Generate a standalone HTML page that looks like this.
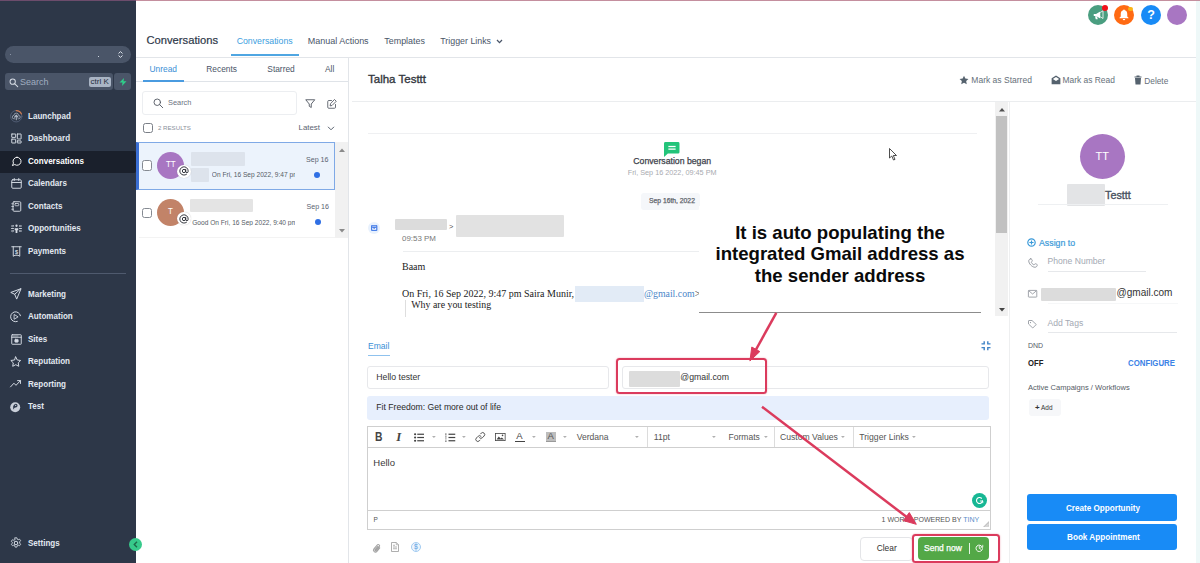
<!DOCTYPE html>
<html>
<head>
<meta charset="utf-8">
<title>Conversations</title>
<style>
*{box-sizing:border-box;margin:0;padding:0}
html,body{width:1200px;height:563px;overflow:hidden;background:#fff;font-family:"Liberation Sans",sans-serif;color:#333}
#app{position:relative;width:1200px;height:563px;overflow:hidden;background:#fff}
.a{position:absolute}
.t{position:absolute;white-space:nowrap;line-height:1;transform:translateY(-50%)}
.b{font-weight:bold}
.serif{font-family:"Liberation Serif",serif}
svg{position:absolute;overflow:visible}
/* sidebar */
#side{position:absolute;left:0;top:0;width:136px;height:563px;background:#2d3748}
.nav{margin-top:-0.4px;color:#e2e8f0;font-size:8.75px;font-weight:bold;left:27.5px;transform:translateY(-50%) scaleX(.92);transform-origin:left center}
.blur{position:absolute;background:#e3e3e3;border-radius:1px;filter:blur(.5px)}
.hl{position:absolute;height:1px;background:#e6e8eb}
</style>
</head>
<body>
<div id="app">
<!-- top accent line -->

<!-- SIDEBAR -->
<div id="side">
  <div class="a" style="left:5px;top:46px;width:126px;height:17px;border-radius:9px;background:#4a5568"></div>
  <div class="a" style="left:5px;top:73px;width:108px;height:17px;border-radius:3px;background:#4a5568"></div>
  <div class="a" style="left:114px;top:73px;width:17px;height:17px;border-radius:3px;background:#4a5568"></div>
  <div class="t" style="left:20px;top:81.5px;font-size:9px;color:#a0aec0">Search</div>
  <div class="a" style="left:88.700px;top:77px;width:22px;height:10px;border-radius:2px;background:#a9b4c4"></div>
  <div class="t" style="left:90.500px;top:82px;font-size:8px;color:#252e3d">ctrl K</div>

  <div class="a" style="left:0;top:150.800px;width:136px;height:21.900px;background:#1a202c;border-radius:0 2px 2px 0"></div>
  <div class="t nav" style="top:116px">Launchpad</div>
  <div class="t nav" style="top:138.5px">Dashboard</div>
  <div class="t nav" style="top:161px;color:#fff">Conversations</div>
  <div class="t nav" style="top:183.5px">Calendars</div>
  <div class="t nav" style="top:206px">Contacts</div>
  <div class="t nav" style="top:228.5px">Opportunities</div>
  <div class="t nav" style="top:251px">Payments</div>
  <div class="a" style="left:10px;top:272.500px;width:116px;height:1px;background:#4f5a6e"></div>
  <div class="t nav" style="top:294px">Marketing</div>
  <div class="t nav" style="top:316.5px">Automation</div>
  <div class="t nav" style="top:339px">Sites</div>
  <div class="t nav" style="top:361.5px">Reputation</div>
  <div class="t nav" style="top:384px">Reporting</div>
  <div class="t nav" style="top:406.5px">Test</div>
  <div class="t nav" style="top:543px">Settings</div>
<svg style="left:9.750px;top:110.250px" width="12.500" height="12.500" viewBox="0 0 22 22" fill="none" stroke="#d5dbe4" stroke-width="1.9" stroke-linecap="round" stroke-linejoin="round"><circle cx="11" cy="11" r="10" stroke="#56617a" stroke-width="1.500"/><path d="M11 1a10 10 0 0 1 9.200 6" stroke="#cf7a4e" stroke-width="2"/><path d="M11 17v-7M8 12.500l3-3.500 3 3.500" stroke="#b4bcc9" stroke-width="1.800"/><path d="M8 15.500H7a3 3 0 0 1 0-6 4 4 0 0 1 8 0 3 3 0 0 1 0 6h-1" stroke="#a4adbc" stroke-width="1.400"/></svg>
<svg style="left:10.5px;top:133.0px" width="11" height="11" viewBox="0 0 22 22" fill="none" stroke="#d5dbe4" stroke-width="1.9" stroke-linecap="round" stroke-linejoin="round"><rect x="1.500" y="2" width="7.800" height="6.800" rx="0.400"/><rect x="12.700" y="2" width="7.500" height="10" rx="0.400"/><rect x="1.500" y="12.300" width="7.800" height="7.700" rx="0.400"/><rect x="12.700" y="15.800" width="7.500" height="4.200" rx="0.400"/></svg>
<svg style="left:10.5px;top:155.5px" width="11" height="11" viewBox="0 0 22 22" fill="none" stroke="#d5dbe4" stroke-width="1.9" stroke-linecap="round" stroke-linejoin="round"><path d="M12 2.500A8 8 0 1 1 7.400 17L2.800 19.200 4.900 14.200A8 8 0 0 1 12 2.500Z" stroke="#fff"/></svg>
<svg style="left:10.5px;top:178.0px" width="11" height="11" viewBox="0 0 22 22" fill="none" stroke="#d5dbe4" stroke-width="1.9" stroke-linecap="round" stroke-linejoin="round"><rect x="1.500" y="3.500" width="19" height="17" rx="2"/><path d="M1.500 9h19M6.500 1v4M15.500 1v4"/></svg>
<svg style="left:10.5px;top:200.5px" width="11" height="11" viewBox="0 0 22 22" fill="none" stroke="#d5dbe4" stroke-width="1.9" stroke-linecap="round" stroke-linejoin="round"><rect x="4" y="1.500" width="15.500" height="19" rx="2"/><rect x="8" y="5" width="7.500" height="4.500" rx="0.800" stroke-width="1.600"/><path d="M1.500 5.500h3.500M1.500 11h3.500M1.500 16.500h3.500" stroke-width="1.600"/></svg>
<svg style="left:10.5px;top:223.0px" width="11" height="11" viewBox="0 0 22 22" fill="none" stroke="#d5dbe4" stroke-width="1.9" stroke-linecap="round" stroke-linejoin="round"><circle cx="11" cy="5.500" r="2.300" fill="#d5dbe4" stroke="none"/><path d="M7.500 10.500h7v4h-1.700v5.500h-3.600v-5.500H7.500z" fill="#d5dbe4" stroke="none"/><path d="M1 6h3M1 11h4M1 16h3M18 6h3M17 11h4M18 16h3" stroke-width="1.800"/><path d="M4 4.500l1.500 1.500L4 7.500M18 4.500L16.500 6 18 7.500M4 14.500l1.500 1.500L4 17.500M18 14.500L16.500 16l1.500 1.500" stroke-width="1.300"/></svg>
<svg style="left:10.5px;top:245.5px" width="11" height="11" viewBox="0 0 22 22" fill="none" stroke="#d5dbe4" stroke-width="1.9" stroke-linecap="round" stroke-linejoin="round"><path d="M1.500 1.500h19M4.500 1.500v19l3.500-2h6l3.500 2v-19"/><text x="11" y="15" font-family="Liberation Sans" font-weight="bold" font-size="11" text-anchor="middle" fill="#d5dbe4" stroke="none">$</text></svg>
<svg style="left:10.25px;top:288.25px" width="11.5" height="11.5" viewBox="0 0 22 22" fill="none" stroke="#d5dbe4" stroke-width="1.9" stroke-linecap="round" stroke-linejoin="round"><path d="M20.500 1.500L1.500 8.500l7.500 3.500 3.500 8.500zM20.500 1.500L9 12"/></svg>
<svg style="left:10.25px;top:310.75px" width="11.5" height="11.5" viewBox="0 0 22 22" fill="none" stroke="#d5dbe4" stroke-width="1.9" stroke-linecap="round" stroke-linejoin="round"><path d="M20 9a9.500 9.500 0 1 0-6 11" /><path d="M8.500 7l7 4.200-7 4.200z" stroke-width="1.700"/></svg>
<svg style="left:10.5px;top:333.5px" width="11" height="11" viewBox="0 0 22 22" fill="none" stroke="#d5dbe4" stroke-width="1.9" stroke-linecap="round" stroke-linejoin="round"><rect x="1.500" y="1.500" width="19" height="19" rx="1"/><path d="M1.500 6.500h19" /><path d="M4 4h10" stroke-width="1.200"/><rect x="7.500" y="10.500" width="7" height="6" rx="1.500" fill="#d5dbe4" stroke-width="1.200"/></svg>
<svg style="left:10.25px;top:355.75px" width="11.5" height="11.5" viewBox="0 0 22 22" fill="none" stroke="#d5dbe4" stroke-width="1.9" stroke-linecap="round" stroke-linejoin="round"><path d="M11 1.800l2.900 5.900 6.500.9-4.700 4.600 1.100 6.500L11 16.600l-5.800 3.100 1.100-6.500L1.600 8.600l6.500-.9z"/></svg>
<svg style="left:10.25px;top:378.25px" width="11.5" height="11.5" viewBox="0 0 22 22" fill="none" stroke="#d5dbe4" stroke-width="1.9" stroke-linecap="round" stroke-linejoin="round"><path d="M1 17l6.500-7 4 4 8.500-9M14.500 5H20v5.500"/></svg>
<svg style="left:9.700px;top:401.800px" width="10.400" height="10.400" viewBox="0 0 22 22"><circle cx="11" cy="11" r="10.500" fill="#c9cfd9"/><path d="M12 3.500a4 4 0 0 1 0 8a3.500 3.500 0 0 0-3 5.500a8 8 0 0 1 3-13.500z" fill="#2f3a4d"/><circle cx="12" cy="7.300" r="1.300" fill="#c9cfd9"/></svg>
<svg style="left:10.0px;top:537.0px" width="12" height="12" viewBox="0 0 22 22" fill="none" stroke="#d5dbe4" stroke-width="1.9" stroke-linecap="round" stroke-linejoin="round"><circle cx="11" cy="11" r="3.200"/><path d="M9.300 1.500h3.400l.6 2.600 1.700.9 2.500-1 2 2.800-1.800 2 .0 2.400 1.800 2-2 2.800-2.500-1-1.700.9-.6 2.600H9.300l-.6-2.600-1.700-.9-2.500 1-2-2.800 1.800-2V9.800l-1.800-2 2-2.800 2.500 1 1.700-.9z" stroke-width="1.600"/></svg>
<svg style="left:8.700px;top:77.500px" width="9.500" height="9.500" viewBox="0 0 18 18" fill="none" stroke="#d5dbe4" stroke-width="1.900" stroke-linecap="round"><circle cx="7" cy="7" r="5"/><path d="M11 11l5.500 5.500"/></svg>
<svg style="left:118.500px;top:78px" width="8" height="8" viewBox="0 0 16 16"><path d="M10 0L1 9h6l-1 7 9-9.500H9z" fill="#2fd08a"/></svg>
<svg style="left:118px;top:50px" width="5" height="9" viewBox="0 0 12 20" fill="none" stroke="#e2e8f0" stroke-width="2.400" stroke-linecap="round" stroke-linejoin="round"><path d="M2 7l4-4 4 4M2 13l4 4 4-4"/></svg>
<div class="a" style="left:97.500px;top:55.500px;width:1.500px;height:1.500px;background:#cbd5e0"></div><div class="a" style="left:10px;top:54px;width:1px;height:1px;background:#8a94a6"></div>
</div>
<div class="a" style="left:0;top:0;width:136px;height:1px;background:#6c4c6c"></div><div class="a" style="left:136px;top:0;width:1064px;height:1px;background:#c48f9e"></div>
<!-- collapse button -->
<div class="a" style="left:129px;top:538px;width:13px;height:13px;border-radius:50%;background:#37ca8b"></div>


<svg style="left:132.500px;top:541px" width="5" height="7" viewBox="0 0 5 7"><path d="M4 0.800L1.300 3.500 4 6.200" fill="none" stroke="#1d6b4a" stroke-width="1.400"/></svg>
<!-- HEADER -->
<div class="t" style="left:146.500px;top:40.700px;font-size:11.200px;color:#2d3748;-webkit-text-stroke:0.200px #2d3748">Conversations</div>
<div class="t" style="left:236.7px;top:40.9px;font-size:8.76px;color:#3b9ede">Conversations</div>
<div class="a" style="left:231px;top:54.100px;width:67.500px;height:1.800px;background:#4fa6e2"></div>
<div class="t" style="left:307.7px;top:40.9px;font-size:8.99px;color:#4a5568">Manual Actions</div>
<div class="t" style="left:384.3px;top:40.9px;font-size:8.93px;color:#4a5568">Templates</div>
<div class="t" style="left:440.3px;top:40.9px;font-size:8.83px;color:#4a5568">Trigger Links</div>
<svg style="left:495.5px;top:39px" width="7" height="5" viewBox="0 0 7 5"><path d="M1 1 L3.5 3.6 L6 1" fill="none" stroke="#4a5568" stroke-width="1.3"/></svg>
<div class="hl" style="left:136px;top:57px;width:1060px;background:#e2e5e9"></div>

<!-- top right icons -->
<div class="a" style="left:1088px;top:5px;width:20px;height:20px;border-radius:50%;background:#4a9e80"></div>
<svg style="left:1093px;top:9.500px" width="11" height="11" viewBox="0 0 22 22"><path d="M1.500 8h4.500l8.500-5v14l-8.500-5H1.500z" fill="#fff"/><path d="M14.500 5l5.500-3.500v15.500l-5.500-3.500" fill="none" stroke="#fff" stroke-width="1.600" stroke-linejoin="round"/><path d="M4 12.500h4l1.500 6h-4z" fill="#fff"/></svg>
<div class="a" style="left:1102px;top:4.800px;width:6px;height:6px;border-radius:50%;background:#f0101a"></div>
<div class="a" style="left:1114.400px;top:5px;width:20px;height:20px;border-radius:50%;background:#ff6a13"></div>
<svg style="left:1119.400px;top:9px" width="10" height="11.500" viewBox="0 0 20 23"><path d="M10 1c-1 0-1.700.7-1.700 1.700C5 3.600 3.500 6.500 3.500 10v5L1 17.500v1h18v-1L16.500 15v-5c0-3.500-1.500-6.400-4.800-7.300C11.700 1.700 11 1 10 1zM7.500 20a2.500 2.500 0 0 0 5 0z" fill="#fff"/></svg>
<div class="a" style="left:1128px;top:6.500px;width:4.600px;height:4.600px;border-radius:50%;background:#fbb415"></div>
<div class="a" style="left:1140.800px;top:5px;width:20px;height:20px;border-radius:50%;background:#188bf6"></div>
<div class="t b" style="left:1147.300px;top:15.300px;font-size:12.500px;color:#fff">?</div>
<div class="a" style="left:1167px;top:5px;width:20px;height:20px;border-radius:50%;background:#a876c2"></div>

<!-- LIST PANEL -->
<div class="a" style="left:348px;top:57px;width:1px;height:506px;background:#e2e5e9"></div>
<div class="t" style="left:149.5px;top:68.8px;font-size:8.4px;color:#3b8fd6">Unread</div>
<div class="t" style="left:206.3px;top:68.8px;font-size:8.4px;color:#4a5568">Recents</div>
<div class="t" style="left:267.3px;top:68.8px;font-size:8.4px;color:#4a5568">Starred</div>
<div class="t" style="left:325px;top:68.8px;font-size:8.4px;color:#4a5568">All</div>
<div class="hl" style="left:136px;top:81px;width:212px;background:#dfe3e8"></div>
<div class="a" style="left:143px;top:80px;width:41px;height:2px;background:#4a9be0"></div>
<div class="a" style="left:142px;top:91px;width:155px;height:24px;border:1px solid #eceef1;border-radius:3px;background:#fff"></div>
<div class="t" style="left:168px;top:103px;font-size:7.4px;color:#6b7280">Search</div>
<div class="a" style="left:142.5px;top:123px;width:10px;height:10px;border:1px solid #7a7f87;border-radius:2.5px;background:#fff"></div>
<div class="t" style="left:158px;top:127.6px;font-size:6.14px;color:#8a919b">2 RESULTS</div>
<div class="t" style="left:298.5px;top:128px;font-size:7.9px;color:#5a6370">Latest</div>
<svg style="left:327px;top:126px" width="8" height="5" viewBox="0 0 8 5"><path d="M1 0.8 L4 3.8 L7 0.8" fill="none" stroke="#5a6370" stroke-width="1"/></svg>

<!-- item 1 -->
<div class="a" style="left:136px;top:142px;width:199px;height:48px;background:#ecf3fc;border:1px solid #7fa9e6;border-left:3px solid #3b6fd4"></div>
<div class="a" style="left:141.700px;top:160.300px;width:10.300px;height:10.300px;border:1px solid #858a92;border-radius:2.500px;background:#fff"></div>
<div class="a" style="left:156.5px;top:151.5px;width:27px;height:27px;border-radius:50%;background:#a876c2"></div>
<div class="t" style="left:166.200px;top:164.700px;font-size:9.300px;color:#fff;transform:translateY(-50%) scaleX(.85);transform-origin:left center">TT</div>
<div class="blur" style="left:190.500px;top:152px;width:54.500px;height:14px;background:#dde3ec"></div>
<div class="blur" style="left:190.500px;top:168px;width:18.500px;height:13.500px;background:#dde3ec"></div>
<div class="t" style="left:211.800px;top:175.300px;font-size:6.600px;color:#555c66;width:83.500px;overflow:hidden">On Fri, 16 Sep 2022, 9:47 pm</div>
<div class="t" style="left:306px;top:161px;font-size:7.1px;color:#5a6370">Sep 16</div>
<div class="a" style="left:314px;top:171.800px;width:6px;height:6px;border-radius:50%;background:#2f6fe4"></div>
<!-- item 2 -->
<div class="a" style="left:141.700px;top:207.800px;width:10.300px;height:10.300px;border:1px solid #858a92;border-radius:2.500px;background:#fff"></div>
<div class="a" style="left:156.5px;top:199px;width:27px;height:27px;border-radius:50%;background:#c28368"></div>
<div class="t" style="left:168.400px;top:212.300px;font-size:9.300px;color:#fff;transform:translateY(-50%) scaleX(.85);transform-origin:left center">T</div>
<div class="blur" style="left:190px;top:199px;width:63px;height:13px;background:#e4e4e4"></div>
<div class="t" style="left:192.200px;top:222.500px;font-size:6.600px;color:#555c66;width:103.300px;overflow:hidden">Good On Fri, 16 Sep 2022, 9:40 pm</div>
<div class="t" style="left:306.500px;top:208.400px;font-size:7.100px;color:#5a6370">Sep 16</div>
<div class="a" style="left:314.500px;top:218.700px;width:6px;height:6px;border-radius:50%;background:#2f6fe4"></div>
<div class="hl" style="left:139px;top:237px;width:196px;background:#f3f3f3"></div>

<svg style="left:153px;top:98px" width="10.500" height="10.500" viewBox="0 0 21 21" fill="none" stroke="#4f5560" stroke-width="1.800" stroke-linecap="round"><circle cx="8.500" cy="8.500" r="6.500"/><path d="M13.500 13.500l6 6"/></svg>
<svg style="left:305px;top:99px" width="10.500" height="9.500" viewBox="0 0 21 19" fill="none" stroke="#4f5560" stroke-width="1.800" stroke-linejoin="round"><path d="M1.500 1.500h18l-7 8.500v7l-4-2.500v-4.500z"/></svg>
<svg style="left:326.500px;top:98.500px" width="10" height="10" viewBox="0 0 20 20" fill="none" stroke="#4f5560" stroke-width="1.700" stroke-linejoin="round" stroke-linecap="round"><path d="M9 3H3.500a2 2 0 0 0-2 2v11.500a2 2 0 0 0 2 2H15a2 2 0 0 0 2-2V11"/><path d="M15.500 1.500l3 3L10 13l-3.800.8L7 10z"/></svg>
<div class="a" style="left:177.200px;top:164.600px;width:13.400px;height:13.400px;border-radius:50%;background:#fff;box-shadow:0 0 1px rgba(0,0,0,.25)"></div>
<svg style="left:178.9px;top:166.4px" width="10" height="10" viewBox="0 0 24 24" fill="none" stroke="#2e3138" stroke-width="2.300" stroke-linecap="round"><circle cx="12" cy="12" r="4"/><path d="M16 8v5a3 3 0 0 0 6 0v-1a10 10 0 1 0-3.920 7.940"/></svg>
<div class="a" style="left:177.200px;top:212.100px;width:13.400px;height:13.400px;border-radius:50%;background:#fff;box-shadow:0 0 1px rgba(0,0,0,.25)"></div>
<svg style="left:178.9px;top:213.9px" width="10" height="10" viewBox="0 0 24 24" fill="none" stroke="#2e3138" stroke-width="2.300" stroke-linecap="round"><circle cx="12" cy="12" r="4"/><path d="M16 8v5a3 3 0 0 0 6 0v-1a10 10 0 1 0-3.920 7.940"/></svg>
<!-- list scrollbar -->
<div class="a" style="left:335px;top:142px;width:13px;height:96px;background:#f1f1f1"></div>
<svg style="left:338.5px;top:148px" width="6" height="4" viewBox="0 0 6 4"><path d="M0 4 L3 0.5 L6 4Z" fill="#8a8a8a"/></svg>
<svg style="left:338.5px;top:228.5px" width="6" height="4" viewBox="0 0 6 4"><path d="M0 0 L3 3.5 L6 0Z" fill="#8a8a8a"/></svg>


<!-- CONVERSATION HEADER -->
<div class="t" style="left:368px;top:79.700px;font-size:11.500px;color:#33373e;-webkit-text-stroke:0.350px #33373e">Talha Testtt</div>
<svg style="left:958.5px;top:75px" width="10" height="10" viewBox="0 0 24 24"><path d="M12 1.5l3.2 6.9 7.5.9-5.5 5.2 1.4 7.5L12 18.3 5.4 22l1.4-7.5L1.3 9.3l7.5-.9z" fill="#55626e"/></svg>
<div class="t" style="left:971.3px;top:80px;font-size:8.53px;color:#66707a">Mark as Starred</div>
<svg style="left:1050.5px;top:75px" width="10" height="10" viewBox="0 0 24 24"><path d="M12 1L1.5 8v14h21V8z M4.5 9.5L12 4.6l7.500 4.9L12 14.5z" fill="#55626e" fill-rule="evenodd"/></svg>
<div class="t" style="left:1062.5px;top:80px;font-size:8.43px;color:#66707a">Mark as Read</div>
<svg style="left:1134px;top:75px" width="8" height="10" viewBox="0 0 16 20"><path d="M1 3h14v2H1z M5 1h6v2H5z M2 6h12l-1 13H3z" fill="#55626e"/></svg>
<div class="t" style="left:1144.300px;top:80.600px;font-size:8.300px;color:#66707a">Delete</div>
<div class="hl" style="left:352px;top:101px;width:844px;background:#ebedef"></div>
<div class="hl" style="left:368px;top:133px;width:609px;background:#eff0f2"></div>

<!-- message area scrollbar -->
<div class="a" style="left:995.300px;top:101.500px;width:13.200px;height:214.300px;background:#f1f1f1"></div>
<div class="a" style="left:996.400px;top:115.500px;width:10.700px;height:117.300px;background:#c1c1c1"></div>
<svg style="left:998.700px;top:108px" width="6" height="3.500" viewBox="0 0 7 4"><path d="M0 4 L3.500 0 L7 4Z" fill="#505050"/></svg>
<svg style="left:998.700px;top:308px" width="6" height="3.500" viewBox="0 0 7 4"><path d="M0 0 L3.500 4 L7 0Z" fill="#444"/></svg>

<!-- conversation began -->
<svg style="left:663.800px;top:141.600px" width="15.500" height="15" viewBox="0 0 16 15.500"><path d="M1.500 0h13a1.500 1.500 0 0 1 1.500 1.500v9a1.500 1.500 0 0 1-1.500 1.500H4l-4 3.500V1.500A1.500 1.500 0 0 1 1.500 0z" fill="#23c47a"/><rect x="4.500" y="4" width="7.500" height="1.300" fill="#fff"/><rect x="4.500" y="6.700" width="7.500" height="1.300" fill="#fff"/></svg>
<div class="t" style="left:633.300px;top:160.900px;font-size:8.700px;color:#3d424b;-webkit-text-stroke:0.250px #3d424b">Conversation began</div>
<div class="t" style="left:627.700px;top:172.700px;font-size:7.280px;color:#a9abb0">Fri, Sep 16 2022, 09:45 PM</div>
<div class="a" style="left:641.300px;top:192.500px;width:58.500px;height:17px;border-radius:3px;background:#f5f7fa"></div>
<div class="t" style="left:649px;top:201.200px;font-size:6.780px;color:#5f646c;-webkit-text-stroke:0.250px #5f646c">Sep 16th, 2022</div>

<!-- message -->
<div class="a" style="left:368px;top:222px;width:12px;height:12px;border-radius:50%;background:#e8f1fd"></div>
<svg style="left:370.800px;top:225px" width="6.400" height="6" viewBox="0 0 13 12"><rect x="0" y="0" width="13" height="12" rx="2" fill="#4a80e8"/><path d="M2.500 5l4 3 4-3v4.500h-8z" fill="#fff"/><path d="M2.500 2.500h8" stroke="#fff" stroke-width="1.200"/></svg>
<div class="blur" style="left:394.700px;top:218.700px;width:52.300px;height:11.600px;background:#dcdcdc"></div>
<div class="t" style="left:449px;top:226.500px;font-size:7.500px;color:#555">&gt;</div>
<div class="blur" style="left:455.700px;top:214.700px;width:108px;height:22.600px;background:#e2e2e2"></div>
<div class="t" style="left:402px;top:239px;font-size:7.940px;color:#777">09:53 PM</div>
<div class="hl" style="left:403px;top:250.500px;width:296px;background:#eceef0"></div>
<div class="t serif" style="left:402px;top:267.3px;font-size:10px;color:#222">Baam</div>
<div class="t serif" style="left:402px;top:293.7px;font-size:10px;color:#222">On Fri, 16 Sep 2022, 9:47 pm Saira Munir,</div>
<div class="a" style="left:574.700px;top:286px;width:69.300px;height:15.700px;background:#e2ebf6"></div>
<div class="t serif" style="left:644px;top:293.7px;font-size:9.81px;color:#4a86c8">@gmail.com<span style="color:#222">&gt;</span></div>
<div class="a" style="left:405px;top:300px;width:1px;height:17px;background:#dedede"></div>
<div class="t serif" style="left:411.3px;top:305px;font-size:9.9px;color:#222">Why are you testing</div>

<!-- annotation white box -->
<div class="a" style="left:699px;top:206px;width:282px;height:106.800px;background:#fff;border-bottom:1px solid #8c8c8c"></div>
<div class="a b" style="left:699px;top:221.500px;width:282px;text-align:center;font-size:18.6px;line-height:21.9px;color:#0a0a0a;white-space:nowrap">It is auto populating the<br>integrated Gmail address as<br>the sender address</div>

<!-- COMPOSER -->
<div class="t" style="left:368px;top:345.7px;font-size:8.52px;color:#3b8fd6">Email</div>
<div class="a" style="left:368px;top:355.200px;width:21.500px;height:1.300px;background:#8fc2ee"></div>
<div class="a" style="left:367.3px;top:366px;width:241.700px;height:23.300px;border:1px solid #e7e8eb;border-radius:3px;background:#fff"></div>
<div class="t" style="left:376.3px;top:377.3px;font-size:8.7px;color:#333">Hello tester</div>
<div class="a" style="left:622px;top:366px;width:367.300px;height:23.300px;border:1px solid #e7e8eb;border-radius:3px;background:#fff"></div>
<div class="blur" style="left:629px;top:370.700px;width:50.700px;height:16.600px;background:#dcdcdc"></div>
<div class="t" style="left:680.3px;top:377.3px;font-size:8.74px;color:#333">@gmail.com</div>
<div class="a" style="left:367.300px;top:396px;width:622px;height:23.800px;border-radius:3px;background:#e7effd"></div>
<div class="t" style="left:376.3px;top:406.8px;font-size:8.63px;color:#2a2a2a">Fit Freedom: Get more out of life</div>

<!-- editor -->
<div class="a" style="left:367.3px;top:425.500px;width:623.400px;height:104px;border:1px solid #cfcfcf;background:#fff"></div>
<div class="hl" style="left:368px;top:447px;width:622px;background:#cfcfcf"></div>
<div class="hl" style="left:368px;top:510px;width:622px;background:#cfcfcf"></div>
<!-- toolbar icons -->
<div class="t b" style="left:375px;top:437px;font-size:12.300px;color:#444;transform:translateY(-50%) scaleX(.84);transform-origin:left center">B</div>
<div class="t serif b" style="left:396.300px;top:437px;font-size:12.800px;color:#444;font-style:italic">I</div>
<svg style="left:414px;top:432.500px" width="10" height="9" viewBox="0 0 20 18" fill="#444"><circle cx="2.200" cy="2.500" r="2.200"/><circle cx="2.200" cy="9" r="2.200"/><circle cx="2.200" cy="15.500" r="2.200"/><rect x="6.500" y="1.300" width="13.500" height="2.400"/><rect x="6.500" y="7.800" width="13.500" height="2.400"/><rect x="6.500" y="14.300" width="13.500" height="2.400"/></svg>
<svg style="left:445px;top:432.500px" width="10.500" height="9" viewBox="0 0 21 18" fill="#444"><rect x="1" y="0.500" width="1.600" height="4.500"/><rect x="0.300" y="7" width="2.800" height="1.300"/><rect x="0.300" y="9.500" width="2.800" height="1.300"/><rect x="0.300" y="13.500" width="2.800" height="1.300"/><rect x="0.300" y="16" width="2.800" height="1.300"/><rect x="7" y="1.300" width="13.500" height="2.400"/><rect x="7" y="7.800" width="13.500" height="2.400"/><rect x="7" y="14.300" width="13.500" height="2.400"/></svg>
<svg style="left:475px;top:432px" width="10.500" height="10" viewBox="0 0 21 20" fill="none" stroke="#444" stroke-width="1.800" stroke-linecap="round"><path d="M9 11.500a4 4 0 0 0 5.700 0l3.500-3.500a4 4 0 0 0-5.700-5.700l-1.500 1.500"/><path d="M12 8.500a4 4 0 0 0-5.700 0l-3.500 3.500a4 4 0 0 0 5.700 5.700l1.500-1.500"/></svg>
<svg style="left:495.200px;top:433px" width="10.600" height="8" viewBox="0 0 21 16"><rect x="0.800" y="0.800" width="19.400" height="14.400" fill="#fff" stroke="#444" stroke-width="1.600"/><path d="M3 13l4.500-6 3.500 4 2.500-2 4.500 4z" fill="#444"/><circle cx="15" cy="4.800" r="1.600" fill="#444"/></svg>
<div class="t" style="left:516.300px;top:436.300px;font-size:9.500px;color:#444">A</div>
<div class="a" style="left:515px;top:441px;width:10px;height:1.300px;background:#444"></div>
<div class="a" style="left:545.600px;top:432px;width:10.100px;height:10.200px;background:#bdbdbd"></div>
<div class="t" style="left:547.500px;top:436.300px;font-size:9.500px;color:#555">A</div>
<div class="a" style="left:545.600px;top:441px;width:10.100px;height:1.200px;background:#9a9a9a"></div>
<svg style="left:431.5px;top:435.8px" width="3.800" height="2" viewBox="0 0 8 4"><path d="M0 0h8L4 4z" fill="#b0b0b0"/></svg>
<svg style="left:461.90000000000003px;top:435.8px" width="3.800" height="2" viewBox="0 0 8 4"><path d="M0 0h8L4 4z" fill="#b0b0b0"/></svg>
<svg style="left:532.1px;top:435.8px" width="3.800" height="2" viewBox="0 0 8 4"><path d="M0 0h8L4 4z" fill="#b0b0b0"/></svg>
<svg style="left:562.8000000000001px;top:435.8px" width="3.800" height="2" viewBox="0 0 8 4"><path d="M0 0h8L4 4z" fill="#b0b0b0"/></svg>
<svg style="left:635.4px;top:435.8px" width="3.800" height="2" viewBox="0 0 8 4"><path d="M0 0h8L4 4z" fill="#b0b0b0"/></svg>
<svg style="left:712.1px;top:435.8px" width="3.800" height="2" viewBox="0 0 8 4"><path d="M0 0h8L4 4z" fill="#b0b0b0"/></svg>
<svg style="left:763.8000000000001px;top:435.8px" width="3.800" height="2" viewBox="0 0 8 4"><path d="M0 0h8L4 4z" fill="#b0b0b0"/></svg>
<svg style="left:841.4px;top:435.8px" width="3.800" height="2" viewBox="0 0 8 4"><path d="M0 0h8L4 4z" fill="#b0b0b0"/></svg>
<svg style="left:912.1px;top:435.8px" width="3.800" height="2" viewBox="0 0 8 4"><path d="M0 0h8L4 4z" fill="#b0b0b0"/></svg>
<div class="t" style="left:576.700px;top:437px;font-size:8.59px;color:#555">Verdana</div>
<div class="a" style="left:647px;top:426.500px;width:1px;height:20.500px;background:#dcdcdc"></div>
<div class="t" style="left:653.700px;top:437px;font-size:8.71px;color:#555">11pt</div>
<div class="t" style="left:728.5px;top:437px;font-size:8.54px;color:#555">Formats</div>
<div class="a" style="left:774px;top:426.500px;width:1px;height:20.500px;background:#dcdcdc"></div>
<div class="t" style="left:780px;top:437px;font-size:8.65px;color:#555">Custom Values</div>
<div class="a" style="left:853.300px;top:426.500px;width:1px;height:20.500px;background:#dcdcdc"></div>
<div class="t" style="left:859.300px;top:437px;font-size:8.65px;color:#555">Trigger Links</div>
<div class="t" style="left:373.300px;top:462.500px;font-size:9.500px;color:#3a3a3a">Hello</div>
<div class="t" style="left:373.5px;top:520px;font-size:6.5px;color:#555">P</div>
<div class="t" style="left:881.600px;top:520px;font-size:7.050px;color:#555">1 WORD&nbsp; POWERED BY <span style="color:#5b8ec9">TINY</span></div>
<svg style="left:983px;top:521px" width="6" height="6" viewBox="0 0 6 6"><path d="M6 0v6H0z" fill="#c4c4c4"/><path d="M6 2.500L2.500 6M6 4.500L4.500 6" stroke="#fff" stroke-width="0.600"/></svg>
<div class="a" style="left:972.300px;top:492.900px;width:15px;height:15px;border-radius:50%;background:#17b794"></div>
<svg style="left:975.300px;top:495.900px" width="9" height="9" viewBox="0 0 18 18" fill="none" stroke="#fff" stroke-width="2.300" stroke-linecap="round"><path d="M15 9.500a6 6 0 1 1-2-5"/><path d="M10.500 10h5v3.500" stroke-width="1.800" stroke-linejoin="round"/></svg>

<!-- composer icons -->
<svg style="left:980.500px;top:341px" width="10" height="9.500" viewBox="0 0 10 9.500" fill="none" stroke="#3f83c6" stroke-width="1.400"><path d="M0.500 2.900h2.700V0.300M9.500 2.900H6.800V0.300M0.500 6.600h2.700v2.600M9.500 6.600H6.800v2.600"/></svg>
<svg style="left:371.500px;top:543px" width="10" height="10.500" viewBox="0 0 10 10.500" fill="none" stroke="#a2a2a2" stroke-width="1.150" stroke-linecap="round"><g transform="rotate(40 5 5.250)"><path d="M6.900 3.300v4.400a1.900 1.900 0 0 1-3.800 0V2.600a1.300 1.300 0 0 1 2.600 0v4.900a0.600 0.600 0 0 1-1.200 0V3.300"/></g></svg>
<svg style="left:391px;top:542.300px" width="8" height="10" viewBox="0 0 16 20" fill="none" stroke="#9a9a9a" stroke-width="1.600" stroke-linejoin="round"><path d="M1 1h9.500l4.500 4.500V19H1z"/><path d="M10.500 1v4.500H15" stroke-width="1.300"/><path d="M4 6.500h4M4 10h8M4 13.500h8" stroke-width="1.500"/></svg>
<svg style="left:410.500px;top:541.700px" width="10" height="10" viewBox="0 0 20 20"><circle cx="10" cy="10" r="9" fill="#eef6fd" stroke="#86bbec" stroke-width="1.500"/><text x="10" y="14.600" font-family="Liberation Sans" font-size="13" text-anchor="middle" fill="#5ea3e3">S</text><path d="M10 2.500v15" stroke="#5ea3e3" stroke-width="1.300"/></svg>
<!-- buttons -->
<div class="a" style="left:860.300px;top:536.800px;width:53px;height:23.800px;border:1px solid #e4e5e8;border-radius:4px;background:#fff"></div>
<div class="t" style="left:876.700px;top:548.3px;font-size:8.4px;color:#333">Clear</div>
<div class="a" style="left:917.700px;top:537.300px;width:71.200px;height:22.700px;border-radius:4px;background:#53a847"></div>
<div class="t" style="left:924px;top:548.200px;font-size:8.500px;color:#fff;-webkit-text-stroke:0.250px #fff">Send now</div>
<div class="a" style="left:969px;top:543.100px;width:1px;height:11px;background:#e6f5e4"></div>
<svg style="left:975.300px;top:544.100px" width="8.500" height="8.500" viewBox="0 0 17 17" fill="none" stroke="#fff" stroke-width="1.900" stroke-linecap="round"><path d="M14.500 6a6.500 6.500 0 1 0 .5 3.500"/><path d="M8.500 4.500v4.200l3 1.500" stroke-width="1.700"/><path d="M15.500 2.500v4h-4" stroke-width="1.500" stroke-linejoin="round"/></svg>

<!-- annotation red boxes & arrows -->
<div class="a" style="left:616.300px;top:358.300px;width:151px;height:35.400px;border:2.400px solid #db3b5d;border-radius:3.500px;box-shadow:0 0 1.500px rgba(219,59,93,.6)"></div>
<div class="a" style="left:911.500px;top:534px;width:88.900px;height:28.700px;border:2.400px solid #db3b5d;border-radius:3.500px;box-shadow:0 0 1.500px rgba(219,59,93,.6)"></div>
<svg style="left:0;top:0" width="1200" height="563" viewBox="0 0 1200 563">
 <g stroke="#db3b5d" stroke-width="2.500" fill="#db3b5d" stroke-linecap="butt" stroke-linejoin="round">
  <path d="M776.300 312.800 L753 355" fill="none"/>
  <path d="M749.900 360.900 L751.800 347 L759.800 351.600 Z" stroke-width="1"/>
  <path d="M762 406.800 L911 520.300" fill="none"/>
  <path d="M916.300 524.300 L903.300 520.600 L909.300 512.600 Z" stroke-width="1"/>
 </g>
</svg>
<!-- cursor -->
<svg style="left:889px;top:148px" width="9" height="13" viewBox="0 0 9 13"><path d="M0.500 0.500 L0.500 10 L2.800 8 L4.500 12 L6 11.400 L4.300 7.500 L7.500 7.500 Z" fill="#fff" stroke="#222" stroke-width="0.800"/></svg>


<!-- RIGHT PANEL -->
<div class="a" style="left:1008.500px;top:102px;width:1px;height:461px;background:#eeeff0"></div>
<div class="a" style="left:1196px;top:1px;width:4px;height:562px;background:#eef8f8"></div>
<div class="a" style="left:1079.800px;top:133.500px;width:45px;height:45px;border-radius:50%;background:#a876c2"></div>
<div class="t" style="left:1095.600px;top:156.200px;font-size:11px;color:#fff">TT</div>
<div class="blur" style="left:1066.800px;top:184.400px;width:38.200px;height:22px;background:#e3e4e6"></div>
<div class="t" style="left:1105px;top:194.700px;font-size:10.800px;color:#4a5260;-webkit-text-stroke:0.350px #4a5260">Testtt</div>
<div class="hl" style="left:1038px;top:204px;width:130px;background:#eef0f2"></div>
<svg style="left:1027.200px;top:237.800px" width="9" height="9" viewBox="0 0 9 9"><circle cx="4.500" cy="4.500" r="3.700" fill="none" stroke="#3b9ad9" stroke-width="1.200"/><path d="M2.400 4.500h4.200M4.500 2.400v4.200" stroke="#3b9ad9" stroke-width="1.200"/></svg>
<svg style="left:1027.800px;top:257.700px" width="10" height="10" viewBox="0 0 20 20" fill="none" stroke="#8a8f97" stroke-width="1.700" stroke-linecap="round" stroke-linejoin="round"><path d="M5.500 1.500c2 0 3 2.500 3 4s-1.800 2-1.800 3 3 5 5 5 1.500-2 3.300-2 3.500 1.300 3.500 3-2 4-4.500 4C8 18.500 1.500 11 1.500 6c0-2.500 2-4.500 4-4.500z"/></svg>
<svg style="left:1028.200px;top:289.500px" width="9.200" height="7.500" viewBox="0 0 18.400 15" fill="none" stroke="#8a8f97" stroke-width="1.600" stroke-linejoin="round"><rect x="0.800" y="0.800" width="16.800" height="13.400" rx="1"/><path d="M1.500 1.500l7.700 6.500 7.700-6.500"/></svg>
<svg style="left:1028px;top:319.500px" width="9" height="8.500" viewBox="0 0 18 17" fill="none" stroke="#8a8f97" stroke-width="1.600" stroke-linejoin="round"><path d="M1 1.500v6.500l8.500 8 7-7-8.500-8H2a1 1 0 0 0-1 .5z"/><circle cx="5" cy="5.200" r="1.100" fill="#8a8f97" stroke="none"/></svg>
<div class="t" style="left:1039px;top:242.500px;font-size:8.800px;color:#3b9ad9;-webkit-text-stroke:0.200px #3b9ad9">Assign to</div>
<div class="t" style="left:1047.500px;top:261.4px;font-size:8.58px;color:#a3a9b3">Phone Number</div>
<div class="hl" style="left:1047.500px;top:271px;width:98.500px;background:#e6e8eb"></div>
<div class="blur" style="left:1041.300px;top:288.400px;width:75.200px;height:12.800px;background:#dcdcdc"></div>
<div class="t" style="left:1116.500px;top:293.2px;font-size:10.05px;color:#333">@gmail.com</div>
<div class="hl" style="left:1047.500px;top:303px;width:130px;background:#f6f7f8"></div>
<div class="t" style="left:1047.500px;top:322.5px;font-size:8.62px;color:#a3a9b3">Add Tags</div>
<div class="hl" style="left:1047.500px;top:332px;width:129.500px;background:#e6e8eb"></div>
<div class="t" style="left:1027.900px;top:345.800px;font-size:7.500px;color:#555c66;transform:translateY(-50%) scaleX(0.93);transform-origin:left center">DND</div>
<div class="t b" style="left:1027.900px;top:363.200px;font-size:8.750px;color:#222;transform:translateY(-50%) scaleX(0.875);transform-origin:left center">OFF</div>
<div class="t b" style="left:1127.900px;top:363.200px;font-size:8.750px;color:#3b82e6;transform:translateY(-50%) scaleX(0.894);transform-origin:left center">CONFIGURE</div>
<div class="t" style="left:1027.900px;top:387.8px;font-size:7.56px;color:#555c66">Active Campaigns / Workflows</div>
<div class="a" style="left:1028.500px;top:399.200px;width:32.600px;height:16.500px;border-radius:3px;background:#f6f7f9"></div>
<div class="t" style="left:1035px;top:407.7px;font-size:6.4px;color:#333"><span class="b" style="font-size:8px;vertical-align:-0.5px">+</span> Add</div>
<div class="a" style="left:1027.400px;top:494.200px;width:150px;height:26.700px;border-radius:3px;background:#188bf6"></div>
<div class="t b" style="left:1065.600px;top:507.700px;font-size:8.750px;color:#fff;transform:translateY(-50%) scaleX(0.928);transform-origin:left center">Create Opportunity</div>
<div class="a" style="left:1027.400px;top:523.700px;width:150px;height:26.700px;border-radius:3px;background:#188bf6"></div>
<div class="t b" style="left:1066.600px;top:537.200px;font-size:8.750px;color:#fff;transform:translateY(-50%) scaleX(0.933);transform-origin:left center">Book Appointment</div>


</div>
</body>
</html>
